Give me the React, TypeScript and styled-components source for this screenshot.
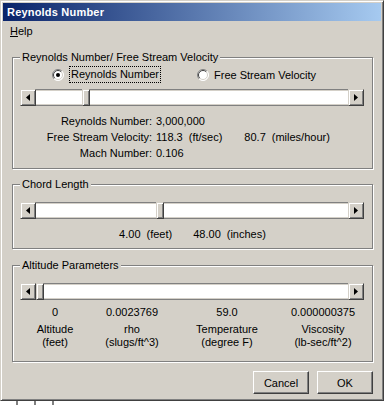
import React from 'react'
import styled, { createGlobalStyle } from 'styled-components'

const GlobalStyle = createGlobalStyle`
    body {
        margin: 0;
        background: #ffffff;
        font-family: 'Liberation Sans', Arial, sans-serif;
        font-size: 11px;
        color: #000000;
    }
`

const Window = styled.div`
    width: 384px;
    height: 401px;
    box-sizing: border-box;
    background: #d4d0c8;
    border: 1px solid;
    border-color: #d4d0c8 #404040 #404040 #d4d0c8;
    box-shadow: inset 1px 1px 0 #ffffff, inset -1px -1px 0 #808080;
    padding: 2px;
    display: flex;
    flex-direction: column;
`

const TitleBar = styled.div`
    height: 18px;
    flex-shrink: 0;
    display: flex;
    align-items: center;
    padding-left: 4px;
    background: linear-gradient(to right, #0a246a, #a6caf0);
    color: #ffffff;
    font-weight: bold;
    letter-spacing: 0.2px;
`

const MenuBar = styled.div`
    height: 19px;
    flex-shrink: 0;
    display: flex;
    align-items: center;
    padding-left: 7px;
`

const Content = styled.div`
    display: flex;
    flex-direction: column;
    padding: 0 8px 0 9px;
`

const GroupBox = styled.div<{ $top: number; $height: number }>`
    position: relative;
    box-sizing: border-box;
    margin-top: ${(p) => p.$top}px;
    height: ${(p) => p.$height}px;
    border: 1px solid #808080;
    box-shadow: 1px 1px 0 #ffffff, inset 1px 1px 0 #ffffff;
    display: flex;
    flex-direction: column;
`

const Caption = styled.span`
    position: absolute;
    top: -7px;
    left: 7px;
    padding: 0 2px;
    line-height: 13px;
    background: #d4d0c8;
`

const RadioRow = styled.div`
    display: flex;
    align-items: center;
    height: 17px;
    margin-top: 8px;
    padding-left: 39px;
`

const RadioItem = styled.div<{ $width?: number }>`
    display: flex;
    align-items: center;
    gap: 5px;
    width: ${(p) => (p.$width ? `${p.$width}px` : 'auto')};
`

const FocusLabel = styled.span`
    border: 1px dotted #000000;
    padding: 0 1px;
    line-height: 15px;
`

const Scroll = styled.div<{ $top: number }>`
    display: flex;
    height: 17px;
    margin: ${(p) => p.$top}px 8px 0 7px;
`

const Bevel = styled.div`
    box-sizing: border-box;
    background: #d4d0c8;
    border: 1px solid;
    border-color: #d4d0c8 #404040 #404040 #d4d0c8;
    box-shadow: inset 1px 1px 0 #ffffff, inset -1px -1px 0 #808080;
`

const ArrowButton = styled(Bevel)`
    width: 16px;
    height: 17px;
    display: flex;
    align-items: center;
    justify-content: center;
`

const Track = styled.div`
    flex: 1;
    display: flex;
    background: #ffffff;
    box-shadow: inset 0 1px 0 #808080, inset 0 2px 0 #d4d0c8,
        inset 0 -1px 0 #808080, inset 0 -2px 0 #d4d0c8;
`

const Thumb = styled(Bevel)`
    width: 8px;
    height: 17px;
`

const StatsGrid = styled.div`
    display: grid;
    grid-template-columns: 139px auto;
    column-gap: 4px;
    margin-top: 7px;
    line-height: 16px;
`

const StatLabel = styled.span`
    text-align: right;
`

const StatValue = styled.span`
    display: flex;
`

const Unit = styled.span<{ $gap: number }>`
    margin-left: ${(p) => p.$gap}px;
`

const ChordRow = styled.div`
    display: flex;
    justify-content: center;
    margin-top: 7px;
    line-height: 16px;
`

const AltGrid = styled.div`
    display: grid;
    grid-template-columns: 78px 76px 114px 78px;
    margin: 6px 0 0 3px;
    text-align: center;
    line-height: 13px;
`

const AltValue = styled.span`
    margin-bottom: 4px;
`

const ButtonRow = styled.div`
    display: flex;
    justify-content: flex-end;
    gap: 8px;
    margin-top: 9px;
`

const PushButton = styled.button`
    width: 56px;
    height: 23px;
    box-sizing: border-box;
    padding: 0;
    font-family: inherit;
    font-size: 11px;
    color: #000000;
    background: #d4d0c8;
    border: 1px solid;
    border-color: #ffffff #404040 #404040 #ffffff;
    box-shadow: inset -1px -1px 0 #808080;
`

const BackStrip = styled.div`
    display: flex;
    height: 4px;
    padding-left: 16px;
`

const BackCell = styled.div`
    width: 16px;
    border-left: 2px solid #808080;
`

const Radio = ({ checked }: { checked?: boolean }) => (
    <svg width="12" height="12" viewBox="0 0 12 12">
        <circle cx="6" cy="6" r="5.5" fill="#ffffff" />
        <path d="M2.1 9.9 A5.5 5.5 0 0 1 9.9 2.1" stroke="#808080" fill="none" />
        <path d="M9.9 2.1 A5.5 5.5 0 0 1 2.1 9.9" stroke="#ffffff" fill="none" />
        <path d="M2.8 9.2 A4.5 4.5 0 0 1 9.2 2.8" stroke="#404040" fill="none" />
        <path d="M9.2 2.8 A4.5 4.5 0 0 1 2.8 9.2" stroke="#d4d0c8" fill="none" />
        {checked && <circle cx="6" cy="6" r="2" fill="#000000" />}
    </svg>
)

const ScrollBar = ({ pos, top }: { pos: number; top: number }) => (
    <Scroll $top={top}>
        <ArrowButton>
            <svg width="4" height="7" viewBox="0 0 4 7">
                <polygon points="4,0 0,3.5 4,7" fill="#000000" />
            </svg>
        </ArrowButton>
        <Track>
            <Thumb style={{ marginLeft: pos }} />
        </Track>
        <ArrowButton>
            <svg width="4" height="7" viewBox="0 0 4 7">
                <polygon points="0,0 4,3.5 0,7" fill="#000000" />
            </svg>
        </ArrowButton>
    </Scroll>
)

const altitude = [
    { value: '0', name: 'Altitude', unit: '(feet)' },
    { value: '0.0023769', name: 'rho', unit: '(slugs/ft^3)' },
    { value: '59.0', name: 'Temperature', unit: '(degree F)' },
    { value: '0.000000375', name: 'Viscosity', unit: '(lb-sec/ft^2)' },
]

const App: React.FC = () => {
    return (
        <>
            <GlobalStyle />
            <Window>
                <TitleBar>Reynolds Number</TitleBar>
                <MenuBar>
                    <span>
                        <u>H</u>elp
                    </span>
                </MenuBar>
                <Content>
                    <GroupBox $top={17} $height={112}>
                        <Caption>Reynolds Number/ Free Stream Velocity</Caption>
                        <RadioRow>
                            <RadioItem $width={145}>
                                <Radio checked />
                                <FocusLabel>Reynolds Number</FocusLabel>
                            </RadioItem>
                            <RadioItem>
                                <Radio />
                                <span>Free Stream Velocity</span>
                            </RadioItem>
                        </RadioRow>
                        <ScrollBar pos={46} top={6} />
                        <StatsGrid>
                            <StatLabel>Reynolds Number:</StatLabel>
                            <StatValue>3,000,000</StatValue>
                            <StatLabel>Free Stream Velocity:</StatLabel>
                            <StatValue>
                                118.3<Unit $gap={6}>(ft/sec)</Unit>
                                <Unit $gap={22}>80.7</Unit>
                                <Unit $gap={6}>(miles/hour)</Unit>
                            </StatValue>
                            <StatLabel>Mach Number:</StatLabel>
                            <StatValue>0.106</StatValue>
                        </StatsGrid>
                    </GroupBox>

                    <GroupBox $top={15} $height={65}>
                        <Caption>Chord Length</Caption>
                        <ScrollBar pos={120} top={17} />
                        <ChordRow>
                            4.00<Unit $gap={6}>(feet)</Unit>
                            <Unit $gap={21}>48.00</Unit>
                            <Unit $gap={6}>(inches)</Unit>
                        </ChordRow>
                    </GroupBox>

                    <GroupBox $top={16} $height={97}>
                        <Caption>Altitude Parameters</Caption>
                        <ScrollBar pos={0} top={17} />
                        <AltGrid>
                            {altitude.map((a) => (
                                <AltValue key={a.name}>{a.value}</AltValue>
                            ))}
                            {altitude.map((a) => (
                                <span key={a.name}>
                                    {a.name}
                                    <br />
                                    {a.unit}
                                </span>
                            ))}
                        </AltGrid>
                    </GroupBox>

                    <ButtonRow>
                        <PushButton>Cancel</PushButton>
                        <PushButton>OK</PushButton>
                    </ButtonRow>
                </Content>
            </Window>
            <BackStrip>
                <BackCell />
                <BackCell />
                <BackCell />
            </BackStrip>
        </>
    )
}

export default App
